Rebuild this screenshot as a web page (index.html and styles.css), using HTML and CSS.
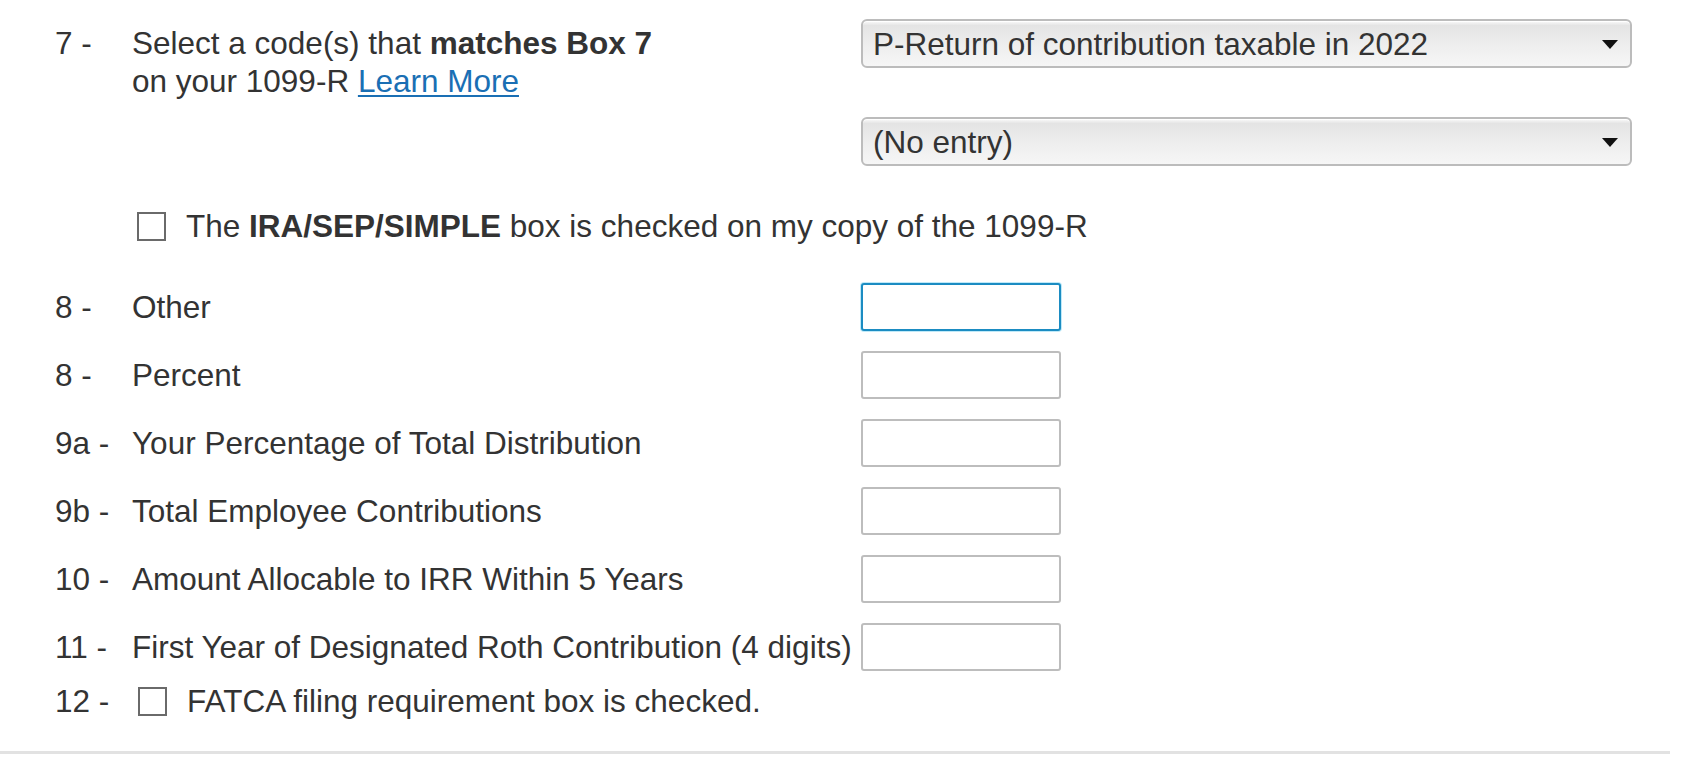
FILE: index.html
```html
<!DOCTYPE html>
<html lang="en">
<head>
<meta charset="utf-8">
<title>1099-R Box 7</title>
<link rel="stylesheet" href="styles.css">
</head>
<body>
<div class="form">
  <div class="row row-top">
    <div class="num num-top">7 -</div>
    <div class="label label-top">Select a code(s) that <b>matches Box 7</b><br>on your 1099-R <a class="link" href="#">Learn More</a></div>
    <div class="selects">
      <div class="select">
        <span class="select-text">P-Return of contribution taxable in 2022</span>
        <svg class="arrow" width="16" height="9" viewBox="0 0 16 9"><path d="M0 0H16L8 9Z" fill="#111"/></svg>
      </div>
      <div class="select">
        <span class="select-text">(No entry)</span>
        <svg class="arrow" width="16" height="9" viewBox="0 0 16 9"><path d="M0 0H16L8 9Z" fill="#111"/></svg>
      </div>
    </div>
  </div>

  <div class="row row-check">
    <div class="num"></div>
    <div class="check-line indent">
      <span class="checkbox"></span>
      <span>The <b>IRA/SEP/SIMPLE</b> box is checked on my copy of the 1099-R</span>
    </div>
  </div>

  <div class="inputs">
    <div class="row row-input">
      <div class="num">8 -</div>
      <div class="label">Other</div>
      <div class="input focused"></div>
    </div>
    <div class="row row-input">
      <div class="num">8 -</div>
      <div class="label">Percent</div>
      <div class="input"></div>
    </div>
    <div class="row row-input">
      <div class="num">9a -</div>
      <div class="label">Your Percentage of Total Distribution</div>
      <div class="input"></div>
    </div>
    <div class="row row-input">
      <div class="num">9b -</div>
      <div class="label">Total Employee Contributions</div>
      <div class="input"></div>
    </div>
    <div class="row row-input">
      <div class="num">10 -</div>
      <div class="label">Amount Allocable to IRR Within 5 Years</div>
      <div class="input"></div>
    </div>
    <div class="row row-input">
      <div class="num">11 -</div>
      <div class="label">First Year of Designated Roth Contribution (4 digits)</div>
      <div class="input"></div>
    </div>
  </div>

  <div class="row row-check row-last">
    <div class="num">12 -</div>
    <div class="check-line">
      <span class="checkbox cb-small"></span>
      <span>FATCA filing requirement box is checked.</span>
    </div>
  </div>
</div>
<div class="divider"></div>
</body>
</html>
```

FILE: styles.css
```css
html, body {
  margin: 0;
  padding: 0;
  background: #ffffff;
}

body {
  font-family: "Liberation Sans", Arial, sans-serif;
  font-size: 31.5px;
  color: #333333;
  line-height: 38px;
}

.form {
  padding: 19px 0 0 55px;
}

.row {
  display: grid;
  grid-template-columns: 77px 729px 771px;
  align-items: center;
}

.row-top {
  align-items: start;
}

.label-top,
.num-top {
  padding-top: 5px;
}

.num {
  white-space: nowrap;
}

.label {
  white-space: nowrap;
}

.link {
  color: #1a6fb4;
  text-decoration: underline;
  text-decoration-thickness: 2px;
  text-underline-offset: 3px;
}

.selects {
  display: flex;
  flex-direction: column;
  gap: 49px;
}

.select {
  position: relative;
  box-sizing: border-box;
  height: 49px;
  border: 2px solid #bcbcbc;
  border-radius: 6px;
  background: linear-gradient(to bottom, #fbfbfb 0, #e4e4e4 10%, #eeeeee 55%, #f6f6f6 100%);
  box-shadow: inset 0 1px 0 #ffffff;
  display: flex;
  align-items: center;
  padding-left: 10px;
  color: #333333;
}

.select-text {
  white-space: nowrap;
}

.arrow {
  position: absolute;
  right: 12px;
  top: 19px;
}

.row-check {
  margin-top: 41px;
}

.check-line {
  display: flex;
  align-items: center;
  gap: 20px;
  white-space: nowrap;
  grid-column: 2 / 4;
}

.indent {
  padding-left: 5px;
}

.checkbox {
  display: inline-block;
  box-sizing: border-box;
  width: 29px;
  height: 29px;
  border: 2px solid #6a6a6a;
  background: #ffffff;
  flex: none;
}

.cb-small {
  margin-left: 6px;
}

.inputs {
  margin-top: 38px;
  display: flex;
  flex-direction: column;
  gap: 20px;
}

.row-input {
  grid-template-columns: 77px 729px 200px;
}

.input {
  box-sizing: border-box;
  width: 200px;
  height: 48px;
  border: 2px solid #bdbdbd;
  border-radius: 3px;
  background: #ffffff;
}

.input.focused {
  border-color: #1b8cc2;
  box-shadow: 0 0 0 1px #bfe9f8;
}

.row-last {
  margin-top: 11px;
}

.divider {
  margin-top: 31px;
  width: 1670px;
  height: 3px;
  background: #e2e2e2;
}
```
